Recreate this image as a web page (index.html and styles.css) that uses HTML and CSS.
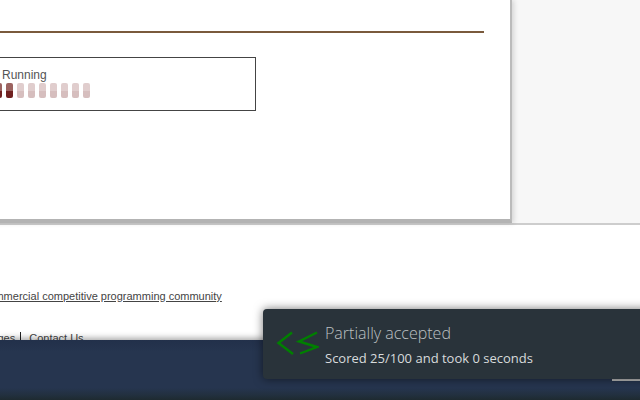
FILE: index.html
```html
<!DOCTYPE html>
<html>
<head>
<meta charset="utf-8">
<title>Submission</title>
<link rel="stylesheet" href="styles.css">
</head>
<body>
<div class="page">
  <div class="workspace">
    <main class="card">
      <hr class="rule">
      <section class="status-box">
        <div class="status-label">Running</div>
        <div class="pills">
          <span class="pill done"></span><span class="pill done"></span><span class="pill active"></span>
          <span class="pill"></span><span class="pill"></span><span class="pill"></span><span class="pill"></span>
          <span class="pill"></span><span class="pill"></span><span class="pill"></span>
        </div>
      </section>
    </main>
  </div>
  <footer class="footer">
    <p class="tagline"><a href="#">Non-commercial competitive programming community</a></p>
    <p class="links"><a href="#">Pages</a><a href="#">Contact Us</a></p>
  </footer>
  <div class="bar"></div>
  <div class="corner-line"></div>
  <aside class="toast">
    <svg class="toast-icon" width="44" height="30" viewBox="0 0 44 30" aria-hidden="true">
      <polyline points="17,3.5 3.5,14 18,25" fill="none" stroke="#008000" stroke-width="2.4"/>
      <polyline points="42,3.5 24,12.5 42,18 25,24.5" fill="none" stroke="#008000" stroke-width="2.4"/>
    </svg>
    <div class="toast-text">
      <div class="toast-title">Partially accepted</div>
      <div class="toast-msg">Scored 25/100 and took 0 seconds</div>
    </div>
  </aside>
</div>
</body>
</html>
```
FILE: styles.css
```css
html, body { margin: 0; padding: 0; height: 100%; overflow: hidden; background: #fff; }
.page { position: relative; width: 640px; height: 400px; overflow: hidden; font-family: "Liberation Sans", Arial, sans-serif; }
.workspace { height: 223px; background: #f7f7f7; border-bottom: 2px solid #cdcdcd; }
.card { width: 610px; height: 219px; margin-left: -100px; background: #fff; border-right: 2px solid #bbb; border-bottom: 4px solid #b3b3b3; box-shadow: 2px 0 5px rgba(0,0,0,.14); box-sizing: content-box; overflow: hidden; }
.rule { margin: 31px 0 0 0; width: 584px; height: 2px; border: 0; background: #7a5a3c; }
.status-box { margin-top: 24px; height: 52px; border: 1px solid #444; padding-left: 101px; box-sizing: content-box; width: 253px; }
.status-label { margin-top: 9px; font-size: 12px; line-height: 16px; color: #555; }
.pills { display: flex; gap: 4px; margin-left: -18px; }
.pill { width: 7px; height: 15px; border-radius: 2px; background: linear-gradient(#e0cdcd 0 53%, #d6bebe 53%); }
.pill.done, .pill.active { background: linear-gradient(#9c6360 0 53%, #702020 53%); }
.footer { font-size: 11px; color: #444; }
.tagline { margin: 65px 0 0 -8px; line-height: 13px; white-space: nowrap; width: 700px; }
.tagline a { color: #444; text-decoration: underline; margin-left: -33px; }
.links { margin: 29px 0 0 -16px; line-height: 13px; white-space: nowrap; }
.links a { color: #444; text-decoration: none; display: inline-block; }
.links a:first-child { padding-right: 5px; border-right: 1px solid #222; margin-right: 8px; }
.bar { position: absolute; left: 0; right: 0; top: 340px; height: 60px; background: linear-gradient(#22304a 0, #26354f 12px, #26354f 48px, #22303f 55px, #1e2a30 60px); box-shadow: 0 -2px 6px rgba(0,0,0,.35); }
.corner-line { position: absolute; left: 612px; right: 0; top: 379px; height: 2px; background: #bdbdbd; }
.toast { position: absolute; left: 263px; top: 309px; width: 400px; height: 70px; display: flex; align-items: center; gap: 6px; padding-left: 12px; box-sizing: border-box; background: #29333a; border-radius: 4px; box-shadow: 0 0 10px rgba(0,0,0,.55); }
.toast-icon { flex: none; }
.toast-text { font-family: "Open Sans", sans-serif; }
.toast-title { font-size: 16px; font-weight: 300; line-height: 22px; color: #bcc0c2; }
.toast-msg { margin-top: 5px; font-size: 13px; line-height: 18px; color: #d8dbdc; }
```
